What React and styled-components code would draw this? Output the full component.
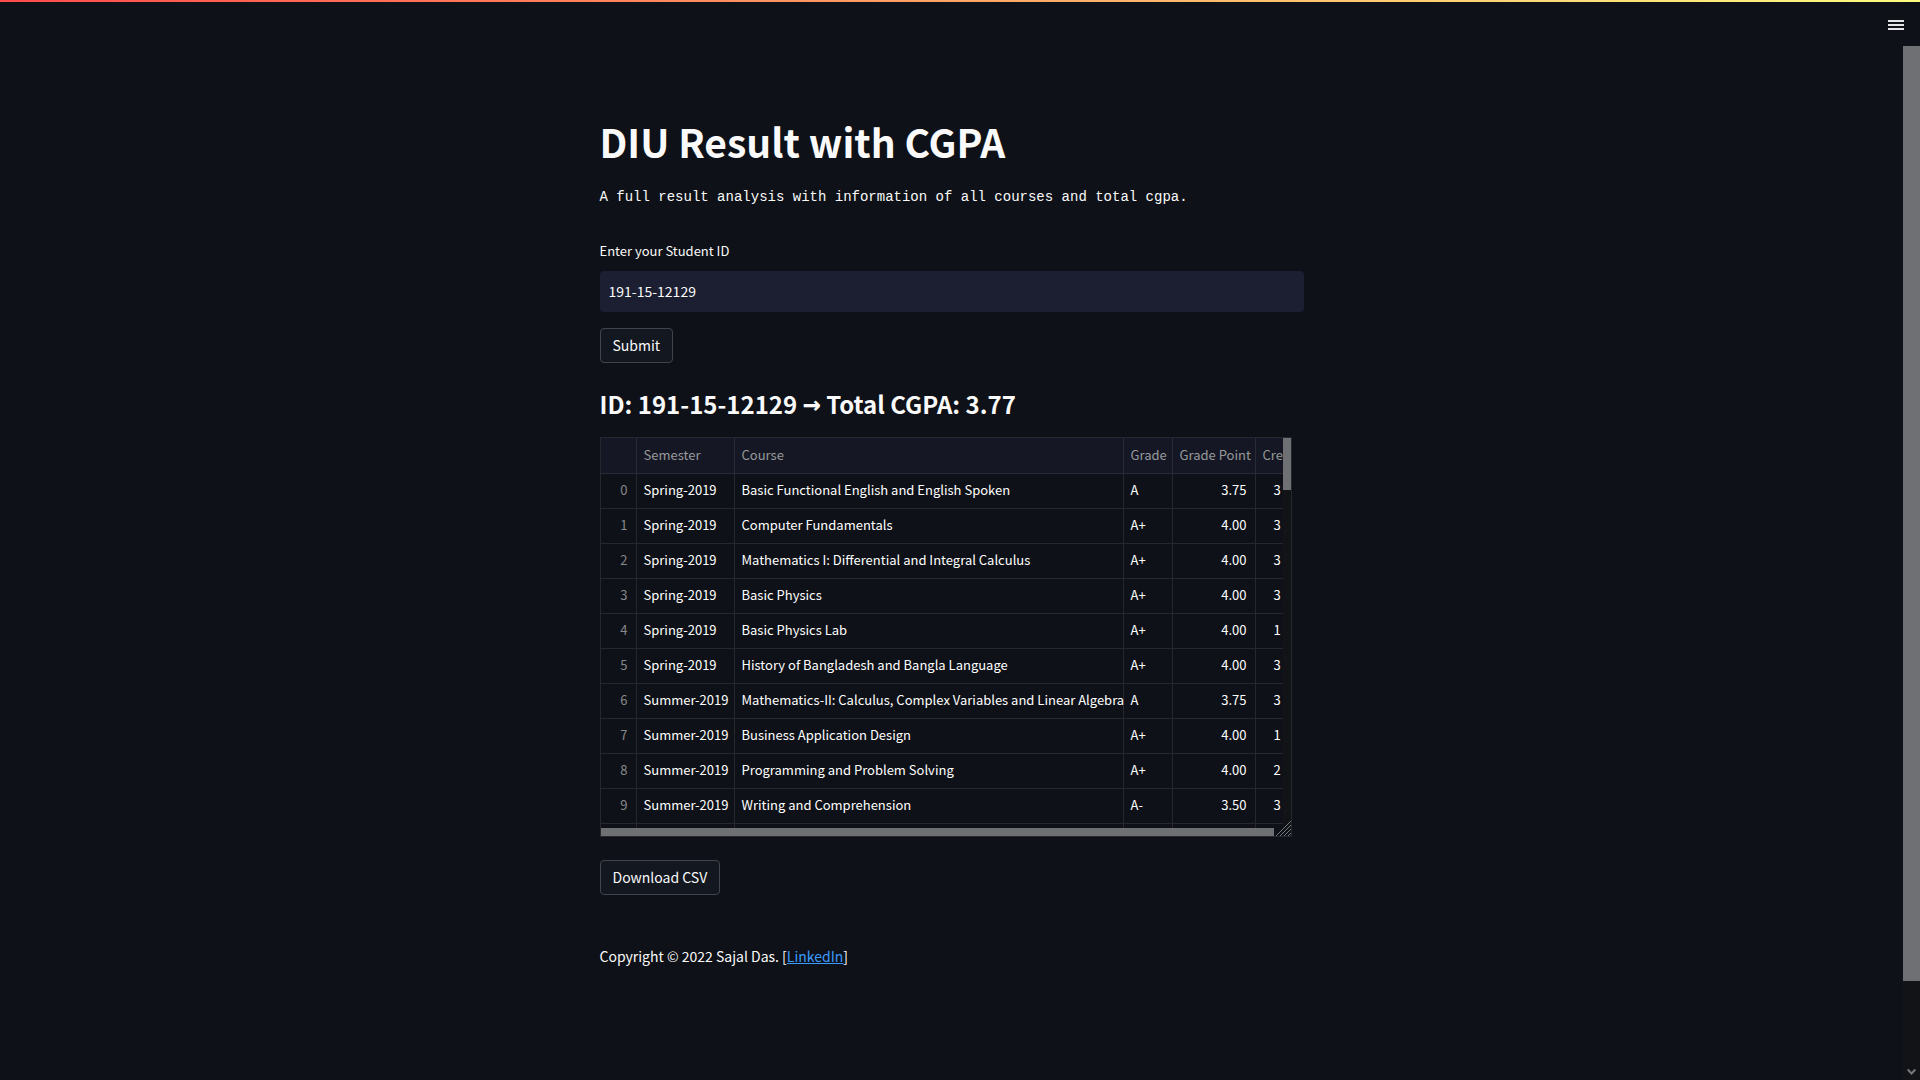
import React from "react";
import styled, { createGlobalStyle } from "styled-components";

const GlobalStyle = createGlobalStyle`
  *, *::before, *::after { box-sizing: border-box; }
  body {
    margin: 0;
    background: #0e1117;
    color: #fafafa;
    font-family: "Noto Sans CJK SC", "Open Sans", sans-serif;
    font-size: 14px;
    line-height: 24px;
  }
  button, input { font: inherit; color: inherit; }
`;

const Page = styled.div`
  min-height: 100vh;
  display: flex;
  flex-direction: column;
`;

const Decoration = styled.div`
  height: 2px;
  background: linear-gradient(90deg, #ff4b4b, #fffd80);
`;

const Header = styled.header`
  height: 44px;
  display: flex;
  justify-content: flex-end;
  align-items: center;
  padding: 2px 14px 0 0;
`;

const MenuButton = styled.button`
  display: flex;
  padding: 0;
  border: 0;
  background: none;
  cursor: pointer;
`;

const Body = styled.div`
  flex: 1;
  display: flex;
`;

const Main = styled.main`
  flex: 1;
  display: flex;
  justify-content: center;
  padding: 65px 16px 64px;
`;

const Column = styled.div`
  width: 100%;
  max-width: 704px;
  display: flex;
  flex-direction: column;
  align-items: flex-start;
`;

const PageScrollbar = styled.div`
  width: 17px;
  display: flex;
  flex-direction: column;
  justify-content: space-between;
  align-items: center;
  background: #121316;
  padding-bottom: 4px;
`;

const PageThumb = styled.div`
  width: 100%;
  height: 935px;
  max-height: 91%;
  background: #6f7073;
`;

const Title = styled.h1`
  margin: 0;
  font-size: 39px;
  font-weight: 700;
  line-height: 60px;
`;

const Intro = styled.p`
  margin: 14px 0 30px;
  font-family: "Liberation Mono", monospace;
  font-size: 14px;
  line-height: 24px;
`;

const Form = styled.form`
  width: 100%;
  display: flex;
  flex-direction: column;
  align-items: flex-start;
`;

const Label = styled.label`
  font-size: 13px;
  margin-bottom: 8px;
`;

const TextInput = styled.input`
  width: 100%;
  height: 41px;
  margin-bottom: 16px;
  padding: 0 9px 2px;
  border: 0;
  border-radius: 4px;
  background: #1c1e31;
  outline: none;
`;

const Button = styled.button`
  height: 35px;
  padding: 0 12px 2px;
  border: 1px solid #41444c;
  border-radius: 4px;
  background: #131720;
  line-height: 20px;
  cursor: pointer;
`;

const Summary = styled.h2`
  margin: 24px 0 16px;
  font-size: 24px;
  font-weight: 700;
  line-height: 34px;
`;

const Arrow = styled.span`
  font-family: "DejaVu Sans Mono", monospace;
  font-size: 30px;
  line-height: 24px;
`;

const Frame = styled.div`
  position: relative;
  width: 692px;
  max-width: 100%;
  height: 400px;
  margin-bottom: 23px;
  display: grid;
  grid-template-columns: minmax(0, 1fr) 8px;
  grid-template-rows: minmax(0, 1fr) 8px;
  border: 1px solid #26282e;
  background: #0e1117;
`;

const Viewport = styled.div`
  overflow: hidden;
`;

const Table = styled.table`
  width: 764px;
  table-layout: fixed;
  border-collapse: separate;
  border-spacing: 0;
  font-size: 13px;
  line-height: 18px;
`;

const Cell = styled.td`
  height: 35px;
  padding: 0 8px 2px 7px;
  border-right: 1px solid #26282e;
  border-bottom: 1px solid #26282e;
  text-align: ${(p) => (p.$right ? "right" : "left")};
  white-space: nowrap;
  color: #ffffff;
`;

const HeadCell = styled(Cell)`
  height: 36px;
  background: #151824;
  border-color: #292c37;
  color: #98999c;
  font-weight: 400;
`;

const IndexCell = styled(Cell)`
  color: #87888b;
  font-weight: 400;
`;

const CreditCell = styled(Cell)`
  padding-left: 18px;
`;

const VerticalBar = styled.div`
  background: #121316;
`;

const VerticalThumb = styled.div`
  height: 52px;
  background: #6f7073;
`;

const HorizontalBar = styled.div`
  grid-column: 1 / -1;
  padding-right: 17px;
  background: #0e1117;
`;

const HorizontalThumb = styled.div`
  height: 8px;
  background: #6f7073;
`;

const Grip = styled.svg`
  position: absolute;
  right: 0;
  bottom: 0;
`;

const Footer = styled.footer`
  margin-top: 49px;
`;

const Link = styled.a`
  color: #3b9cff;
  text-decoration: underline;
`;

const columns = [
  { name: "", width: 36 },
  { name: "Semester", width: 98 },
  { name: "Course", width: 389 },
  { name: "Grade", width: 49 },
  { name: "Grade Point", width: 83 },
  { name: "Credit", width: 109 },
];

const rows = [
  ["Spring-2019", "Basic Functional English and English Spoken", "A", "3.75", "3"],
  ["Spring-2019", "Computer Fundamentals", "A+", "4.00", "3"],
  ["Spring-2019", "Mathematics I: Differential and Integral Calculus", "A+", "4.00", "3"],
  ["Spring-2019", "Basic Physics", "A+", "4.00", "3"],
  ["Spring-2019", "Basic Physics Lab", "A+", "4.00", "1"],
  ["Spring-2019", "History of Bangladesh and Bangla Language", "A+", "4.00", "3"],
  ["Summer-2019", "Mathematics-II: Calculus, Complex Variables and Linear Algebra", "A", "3.75", "3"],
  ["Summer-2019", "Business Application Design", "A+", "4.00", "1"],
  ["Summer-2019", "Programming and Problem Solving", "A+", "4.00", "2"],
  ["Summer-2019", "Writing and Comprehension", "A-", "3.50", "3"],
  ["", "", "", "", ""],
];

function ResultTable() {
  return (
    <Frame>
      <Viewport>
        <Table>
          <colgroup>
            {columns.map((c) => (
              <col key={c.name} width={c.width} />
            ))}
          </colgroup>
          <thead>
            <tr>
              {columns.map((c) => (
                <HeadCell as="th" scope="col" key={c.name}>{c.name}</HeadCell>
              ))}
            </tr>
          </thead>
          <tbody>
            {rows.map(([semester, course, grade, point, credit], i) => (
              <tr key={i}>
                <IndexCell as="th" scope="row" $right>{semester ? i : ""}</IndexCell>
                <Cell>{semester}</Cell>
                <Cell>{course}</Cell>
                <Cell>{grade}</Cell>
                <Cell $right>{point}</Cell>
                <CreditCell>{credit}</CreditCell>
              </tr>
            ))}
          </tbody>
        </Table>
      </Viewport>
      <VerticalBar><VerticalThumb /></VerticalBar>
      <HorizontalBar><HorizontalThumb /></HorizontalBar>
      <Grip width="16" height="16" viewBox="0 0 16 16" stroke="#77787b" strokeWidth="1" aria-hidden="true">
        <path d="M1 16 16 1M5 16 16 5M9 16 16 9M13 16 16 13" />
      </Grip>
    </Frame>
  );
}

export default function App() {
  return (
    <>
      <GlobalStyle />
      <Page>
        <Decoration />
        <Header>
          <MenuButton type="button" aria-label="Menu">
            <svg width="20" height="20" viewBox="0 0 20 20" fill="#e4e4e6" aria-hidden="true">
              <path d="M2 5h16v2H2zM2 9h16v2H2zM2 13h16v2H2z" />
            </svg>
          </MenuButton>
        </Header>
        <Body>
          <Main>
            <Column>
              <Title>DIU Result with CGPA</Title>
              <Intro>A full result analysis with information of all courses and total cgpa.</Intro>
              <Form onSubmit={(e) => e.preventDefault()}>
                <Label htmlFor="student-id">Enter your Student ID</Label>
                <TextInput id="student-id" type="text" defaultValue="191-15-12129" />
                <Button type="submit">Submit</Button>
              </Form>
              <Summary>ID: 191-15-12129 <Arrow>→</Arrow> Total CGPA: 3.77</Summary>
              <ResultTable />
              <Button type="button">Download CSV</Button>
              <Footer>
                Copyright © 2022 Sajal Das. [<Link href="#linkedin">LinkedIn</Link>]
              </Footer>
            </Column>
          </Main>
          <PageScrollbar>
            <PageThumb />
            <svg width="9" height="8" viewBox="0 0 9 8" fill="none" stroke="#77787b" strokeWidth="2" aria-hidden="true">
              <path d="M.7 1.5 4.5 5.5 8.3 1.5" />
            </svg>
          </PageScrollbar>
        </Body>
      </Page>
    </>
  );
}
